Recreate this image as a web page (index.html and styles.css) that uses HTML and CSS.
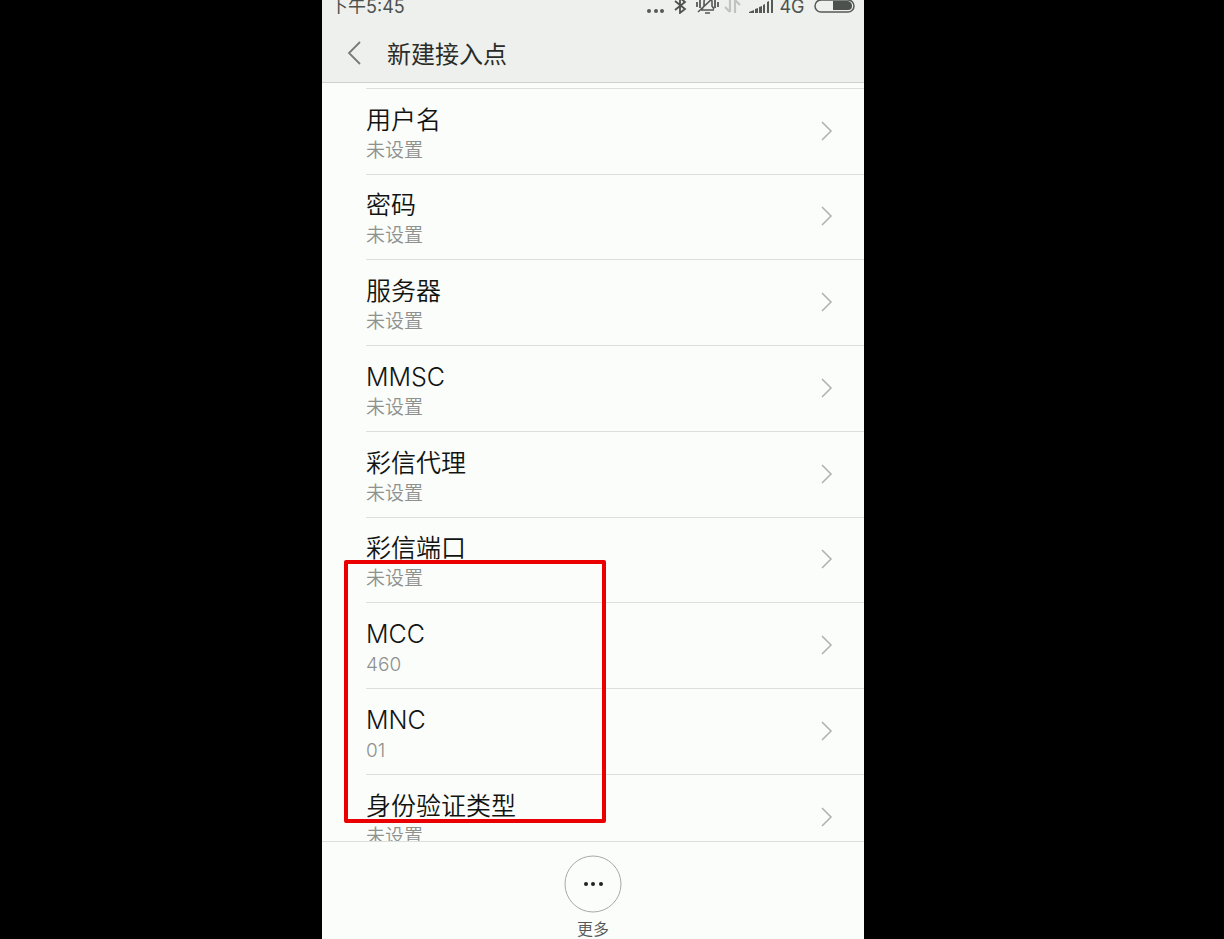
FILE: index.html
```html
<!DOCTYPE html>
<html lang="zh-CN">
<head>
    <meta charset="utf-8">
    <meta name="viewport" content="width=device-width, initial-scale=1">
    <title>新建接入点</title>
    <link rel="stylesheet" href="styles.css">
</head>
<body>

<div class="phone">
    <!-- Status bar -->
    <div class="status">
        <span class="time">下午5:45</span>
        <svg class="icons" width="126" height="16" viewBox="0 0 126 16">
            <g fill="#555a56">
                <circle cx="2" cy="12" r="2"/>
                <circle cx="9" cy="12" r="2"/>
                <circle cx="15" cy="12" r="2"/>
            </g>
            <path d="M28 2l10 8-5 4V-1l5 4-10 8" fill="none" stroke="#4c514d" stroke-width="1.8"/>
            <g fill="none" stroke="#555a56" stroke-width="1.6">
                <path d="M54 11h13M55 10l2-3V3q0-4 4-4t4 4v4l2 3M51 13L67-2M58 14h5"/>
                <path d="M50 3v5M53 1v8M68 1v8M71 3v5" stroke-width="1.8"/>
            </g>
            <path d="M83-2v15M83 13l-5-5M88 14V1l5 5" fill="none" stroke="#c0c4c0" stroke-width="2.2"/>
            <path fill="#555a56" d="M102 14v-1l5-2v3zM108 14v-4l3-1v5zM112 14V8l3-1v7zM116 14V6l2-1v9zM120 14V3l2-1v12zM124 14V1h2v13z"/>
        </svg>
        <span class="network">4G</span>
        <svg class="battery" width="42" height="16" viewBox="0 0 42 16">
            <rect x="1" y="1" width="39" height="12" rx="6" fill="none" stroke="#555a56" stroke-width="1.5"/>
            <path d="M19 2h15q4 1 4 5t-4 4H19z" fill="#4c514d"/>
        </svg>
    </div>

    <header class="titlebar">
        <button type="button" class="back" aria-label="返回">
            <svg width="14" height="24" viewBox="0 0 14 24"><path d="M13 1L2 12l11 11" fill="none" stroke="#777b78" stroke-width="1.8"/></svg>
        </button>
        <h1>新建接入点</h1>
    </header>

    <main class="content">
        <ul class="settings">
            <li><button type="button" class="row"><span class="text"><span class="name">用户名</span><span class="value">未设置</span></span><svg class="arrow" viewBox="0 0 12 20"><path d="M1 1l9 9-9 9"/></svg></button></li>
            <li><button type="button" class="row"><span class="text"><span class="name">密码</span><span class="value">未设置</span></span><svg class="arrow" viewBox="0 0 12 20"><path d="M1 1l9 9-9 9"/></svg></button></li>
            <li><button type="button" class="row"><span class="text"><span class="name">服务器</span><span class="value">未设置</span></span><svg class="arrow" viewBox="0 0 12 20"><path d="M1 1l9 9-9 9"/></svg></button></li>
            <li><button type="button" class="row"><span class="text"><span class="name">MMSC</span><span class="value">未设置</span></span><svg class="arrow" viewBox="0 0 12 20"><path d="M1 1l9 9-9 9"/></svg></button></li>
            <li><button type="button" class="row"><span class="text"><span class="name">彩信代理</span><span class="value">未设置</span></span><svg class="arrow" viewBox="0 0 12 20"><path d="M1 1l9 9-9 9"/></svg></button></li>
            <li><button type="button" class="row"><span class="text"><span class="name">彩信端口</span><span class="value">未设置</span></span><svg class="arrow" viewBox="0 0 12 20"><path d="M1 1l9 9-9 9"/></svg></button></li>
            <li><button type="button" class="row"><span class="text"><span class="name">MCC</span><span class="value">460</span></span><svg class="arrow" viewBox="0 0 12 20"><path d="M1 1l9 9-9 9"/></svg></button></li>
            <li><button type="button" class="row"><span class="text"><span class="name">MNC</span><span class="value">01</span></span><svg class="arrow" viewBox="0 0 12 20"><path d="M1 1l9 9-9 9"/></svg></button></li>
            <li><button type="button" class="row"><span class="text"><span class="name">身份验证类型</span><span class="value">未设置</span></span><svg class="arrow" viewBox="0 0 12 20"><path d="M1 1l9 9-9 9"/></svg></button></li>
        </ul>
        <div class="highlight"></div>
    </main>

    <footer class="toolbar">
        <button type="button" class="more">
            <svg width="58" height="58" viewBox="0 0 58 58">
                <circle cx="29" cy="29" r="28" fill="none" stroke="#a6a9a6"/>
                <g fill="#222">
                    <circle cx="22" cy="29" r="2"/>
                    <circle cx="29" cy="29" r="2"/>
                    <circle cx="37" cy="29" r="2"/>
                </g>
            </svg>
            <span>更多</span>
        </button>
    </footer>
</div>

</body>
</html>
```
FILE: styles.css
```css
* {
    box-sizing: border-box;
}

body {
    margin: 0;
    display: grid;
    grid-template-columns: 322fr minmax(0, 542px) 360fr;
    background: #000;
    color: #121412;
    font-family: Inter, "Noto Sans CJK SC", sans-serif;
    font-weight: 350;
}

button {
    border: none;
    padding: 0;
    background: none;
    color: inherit;
    font: inherit;
    text-align: left;
    cursor: pointer;
}

svg {
    display: block;
    flex-shrink: 0;
    overflow: visible;
}

.phone {
    grid-column: 2;
    display: flex;
    flex-direction: column;
    height: 100vh;
    overflow: hidden;
    background: #fbfdfa;
}

/* Status bar, partly scrolled off the top */
.status {
    display: flex;
    flex-shrink: 0;
    align-items: center;
    height: 14px;
    padding: 0 8px;
    background: #eef0ed;
    color: #4c514d;
    font-size: 18px;
    font-weight: 400;
    line-height: 14px;
}

.time {
    flex: 1;
}

.network {
    width: 41px;
    padding-right: 3px;
    text-align: center;
}

.titlebar {
    display: flex;
    flex-shrink: 0;
    align-items: center;
    gap: 26px;
    height: 69px;
    padding: 10px 25px 0;
    background: #eef0ed;
    border-bottom: 1px solid #cfd1ce;
}

.titlebar h1 {
    margin: 0;
    padding-top: 3px;
    color: #2a2c2a;
    font-size: 24px;
    font-weight: 400;
    line-height: 32px;
}

/* Settings list */
.content {
    position: relative;
    flex: 1;
    min-height: 0;
    overflow: hidden;
    padding: 5px 0 0 44px;
}

.settings {
    list-style: none;
    margin: 0;
    padding: 0;
}

.row {
    display: flex;
    align-items: center;
    justify-content: space-between;
    width: 100%;
    height: 86px;
    padding: 0 31px 2px 0;
    border-top: 1px solid #dddfdc;
}

.settings li:nth-child(4n + 2) .row {
    height: 85px;
}

.text {
    padding-top: 8px;
}

.name,
.value {
    display: block;
}

.name {
    font-size: 25px;
    line-height: 32px;
}

.value {
    color: #8e918e;
    font-size: 19px;
    line-height: 30px;
}

.arrow {
    width: 12px;
    height: 20px;
    fill: none;
    stroke: #aeb1ae;
    stroke-width: 1.5;
}

/* Red marker round the MCC and MNC rows */
.highlight {
    position: absolute;
    top: 477px;
    left: 22px;
    width: 262px;
    height: 263px;
    border: 4px solid #ea0000;
    border-radius: 2px;
    pointer-events: none;
}

.toolbar {
    display: flex;
    flex-shrink: 0;
    justify-content: center;
    align-items: flex-start;
    height: 98px;
    padding-top: 13px;
    overflow: hidden;
    border-top: 1px solid #dddfdc;
}

.more {
    display: flex;
    flex-direction: column;
    align-items: center;
    gap: 4px;
    color: #555855;
    font-size: 16px;
    line-height: 24px;
}
```
